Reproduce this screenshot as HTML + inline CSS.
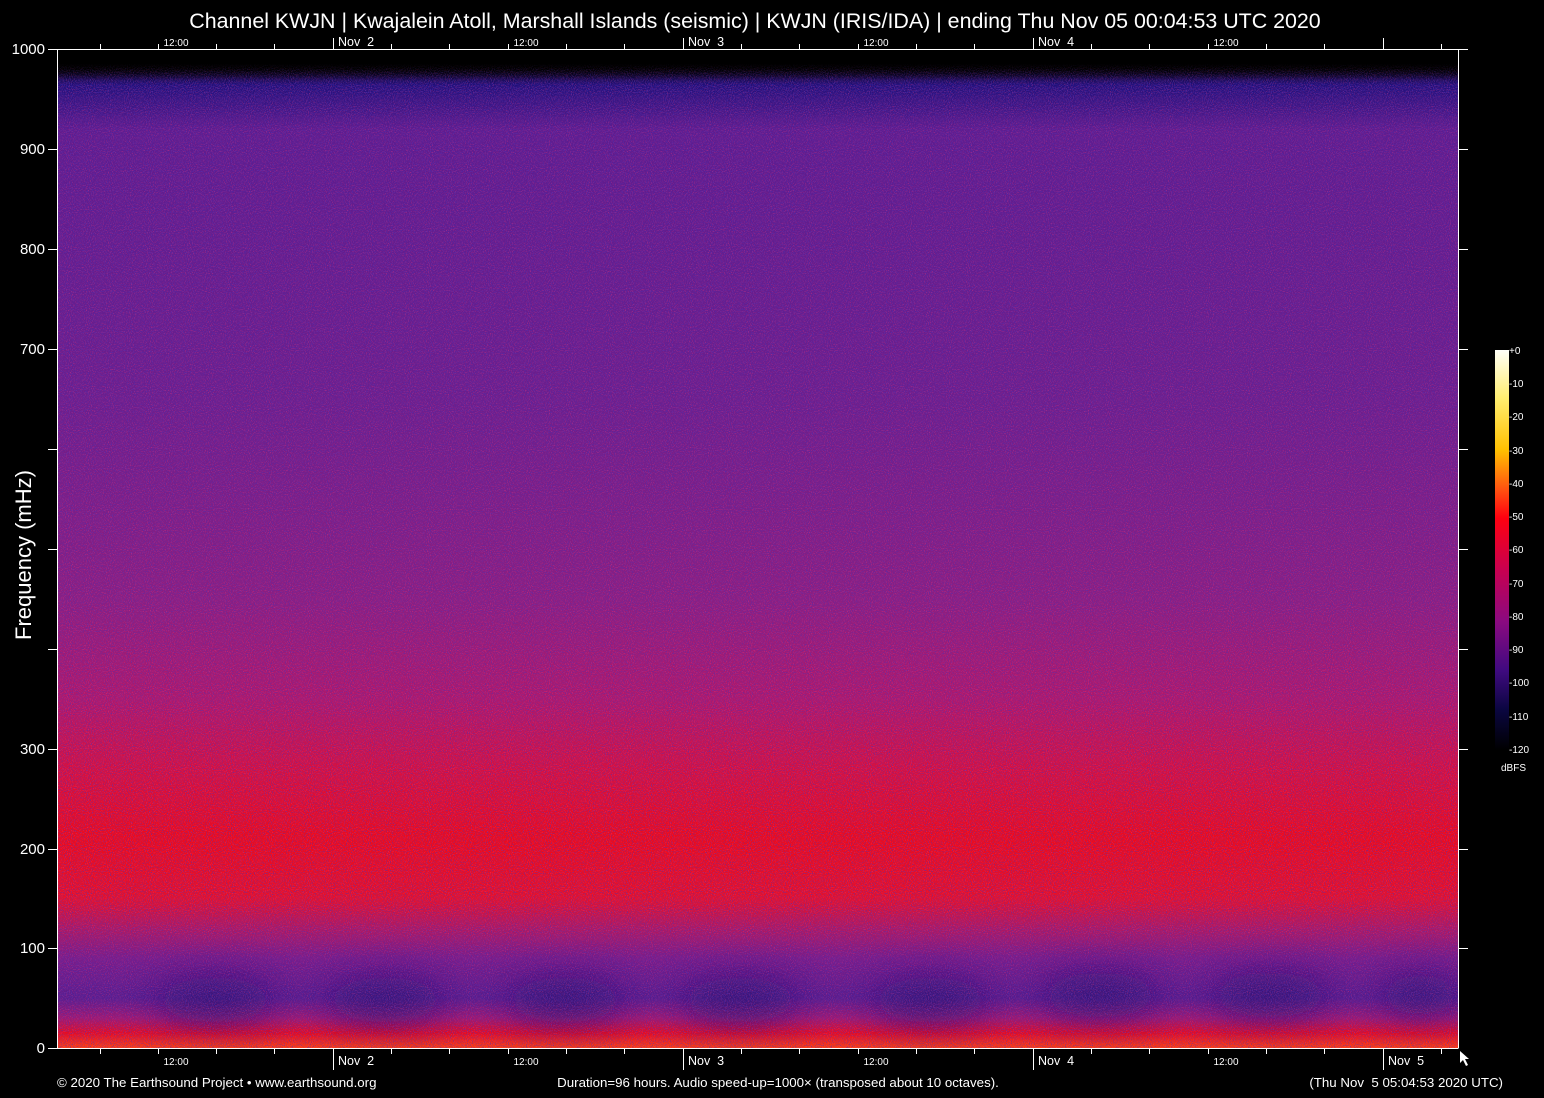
<!DOCTYPE html>
<html><head><meta charset="utf-8"><style>
html,body{margin:0;padding:0;background:#000;width:1544px;height:1098px;overflow:hidden}
svg{display:block}
text{font-family:"Liberation Sans",sans-serif;fill:#fff}
</style></head><body>
<svg width="1544" height="1098" viewBox="0 0 1544 1098" xmlns="http://www.w3.org/2000/svg">
<defs>
<linearGradient id="v" x1="0" y1="50" x2="0" y2="1048" gradientUnits="userSpaceOnUse">
<stop offset="0" stop-color="#000"/>
<stop offset="0.018" stop-color="#000"/>
<stop offset="0.035" stop-color="#20107a"/>
<stop offset="0.08" stop-color="#5e1c8e"/>
<stop offset="0.35" stop-color="#6c1e8c"/>
<stop offset="0.55" stop-color="#8c1e80"/>
<stop offset="0.65" stop-color="#b0186a"/>
<stop offset="0.72" stop-color="#d8103e"/>
<stop offset="0.79" stop-color="#f00a18"/>
<stop offset="0.85" stop-color="#e81028"/>
<stop offset="0.88" stop-color="#b01860"/>
<stop offset="0.91" stop-color="#7a1c88"/>
<stop offset="0.95" stop-color="#5a1c8c"/>
<stop offset="0.97" stop-color="#a01870"/>
<stop offset="0.985" stop-color="#e80c20"/>
<stop offset="1" stop-color="#ff4010"/>
</linearGradient>
<linearGradient id="top" x1="0" y1="50" x2="0" y2="80" gradientUnits="userSpaceOnUse">
<stop offset="0" stop-color="#000" stop-opacity="1"/>
<stop offset="0.45" stop-color="#000" stop-opacity="1"/>
<stop offset="1" stop-color="#000" stop-opacity="0"/>
</linearGradient>
<filter id="n1" x="0" y="0" width="100%" height="100%">
<feTurbulence type="fractalNoise" baseFrequency="0.95" numOctaves="1" seed="3"/>
<feColorMatrix type="matrix" values="0 0 0 0 0.08  0 0 0 0 0.03  0 0 0 0 0.45  0 0 0 3 -1.45"/>
</filter>
<filter id="n2" x="0" y="0" width="100%" height="100%">
<feTurbulence type="fractalNoise" baseFrequency="0.95" numOctaves="1" seed="11"/>
<feColorMatrix type="matrix" values="0 0 0 0 0.95  0 0 0 0 0.05  0 0 0 0 0.25  0 0 0 3 -1.5"/>
</filter>
<filter id="b" x="-50%" y="-100%" width="200%" height="300%"><feGaussianBlur stdDeviation="18"/></filter>
<clipPath id="c"><rect x="58" y="50" width="1400" height="998"/></clipPath>
</defs>
<g clip-path="url(#c)">
<rect x="58" y="50" width="1400" height="998" fill="url(#v)"/>
<g filter="url(#b)" fill="#200a70" opacity="0.75">
<ellipse cx="215" cy="1000" rx="60" ry="22"/>
<ellipse cx="385" cy="1000" rx="60" ry="22"/>
<ellipse cx="565" cy="1000" rx="60" ry="22"/>
<ellipse cx="740" cy="1000" rx="60" ry="22"/>
<ellipse cx="930" cy="1000" rx="60" ry="22"/>
<ellipse cx="1100" cy="995" rx="60" ry="22"/>
<ellipse cx="1270" cy="995" rx="60" ry="22"/>
<ellipse cx="1420" cy="995" rx="40" ry="20"/>
</g>
<rect x="58" y="50" width="1400" height="998" filter="url(#n2)" opacity="0.5"/>
<rect x="58" y="50" width="1400" height="998" filter="url(#n1)" opacity="0.85"/>
<rect x="58" y="50" width="1400" height="30" fill="url(#top)"/>
</g>
<g stroke="#fff" stroke-width="1" fill="none">
<line x1="57.5" y1="49.5" x2="1468" y2="49.5"/>
<line x1="57.5" y1="49.5" x2="57.5" y2="1048.5"/>
<line x1="57.5" y1="1048.5" x2="1458" y2="1048.5"/>
<line x1="1458.5" y1="49.5" x2="1458.5" y2="1048.5"/>
<path d="M48 49.5h10M48 149.5h10M48 249.5h10M48 349.5h10M48 449.5h10M48 549.5h10M48 649.5h10M48 749.5h10M48 849.5h10M48 948.5h10M48 1048.5h10"/>
<path d="M1458 149.5h10M1458 249.5h10M1458 349.5h10M1458 449.5h10M1458 549.5h10M1458 649.5h10M1458 749.5h10M1458 849.5h10M1458 948.5h10"/>
<path d="M100.5 44v6M158.5 44v6M216.5 44v6M274.5 44v6M333.5 38v12M391.5 44v6M449.5 44v6M508.5 44v6M566.5 44v6M624.5 44v6M683.5 38v12M741.5 44v6M799.5 44v6M858.5 44v6M916.5 44v6M974.5 44v6M1033.5 38v12M1091.5 44v6M1149.5 44v6M1208.5 44v6M1266.5 44v6M1324.5 44v6M1383.5 38v12M1441.5 44v6"/>
<path d="M100.5 1048v6M158.5 1048v6M216.5 1048v6M274.5 1048v6M333.5 1048v22M391.5 1048v6M449.5 1048v6M508.5 1048v6M566.5 1048v6M624.5 1048v6M683.5 1048v22M741.5 1048v6M799.5 1048v6M858.5 1048v6M916.5 1048v6M974.5 1048v6M1033.5 1048v22M1091.5 1048v6M1149.5 1048v6M1208.5 1048v6M1266.5 1048v6M1324.5 1048v6M1383.5 1048v22M1441.5 1048v6"/>
</g>
<text x="755" y="28" font-size="21.4" text-anchor="middle">Channel KWJN | Kwajalein Atoll, Marshall Islands (seismic) | KWJN (IRIS/IDA) | ending Thu Nov 05 00:04:53 UTC 2020</text>
<g font-size="15" text-anchor="end">
<text x="45" y="54">1000</text><text x="45" y="154">900</text><text x="45" y="254">800</text><text x="45" y="354">700</text>
<text x="45" y="754">300</text><text x="45" y="854">200</text><text x="45" y="953">100</text><text x="45" y="1053">0</text>
</g>
<text transform="translate(31 555) rotate(-90)" font-size="22" text-anchor="middle">Frequency (mHz)</text>
<g font-size="10" text-anchor="middle">
<text x="176" y="46">12:00</text><text x="526" y="46">12:00</text><text x="876" y="46">12:00</text><text x="1226" y="46">12:00</text>
<text x="176" y="1065">12:00</text><text x="526" y="1065">12:00</text><text x="876" y="1065">12:00</text><text x="1226" y="1065">12:00</text>
</g>
<g font-size="12.5">
<text x="338" y="46" xml:space="preserve">Nov  2</text><text x="688" y="46" xml:space="preserve">Nov  3</text><text x="1038" y="46" xml:space="preserve">Nov  4</text>
<text x="338" y="1065" xml:space="preserve">Nov  2</text><text x="688" y="1065" xml:space="preserve">Nov  3</text><text x="1038" y="1065" xml:space="preserve">Nov  4</text><text x="1388" y="1065" xml:space="preserve">Nov  5</text>
</g>
<path d="M1460 1051l0 12 3-3 3 6 2-1-3-6 4 0z" fill="#fff"/>
<g font-size="13.3">
<text x="57" y="1087">© 2020 The Earthsound Project • www.earthsound.org</text>
<text x="778" y="1087" text-anchor="middle">Duration=96 hours. Audio speed-up=1000× (transposed about 10 octaves).</text>
<text x="1503" y="1087" text-anchor="end" xml:space="preserve">(Thu Nov  5 05:04:53 2020 UTC)</text>
</g>
<linearGradient id="cb" x1="0" y1="350" x2="0" y2="750" gradientUnits="userSpaceOnUse">
<stop offset="0" stop-color="#fffff8"/>
<stop offset="0.12" stop-color="#ffee70"/>
<stop offset="0.25" stop-color="#ffc000"/>
<stop offset="0.35" stop-color="#ff5010"/>
<stop offset="0.42" stop-color="#ff0010"/>
<stop offset="0.55" stop-color="#c80050"/>
<stop offset="0.68" stop-color="#8a0a80"/>
<stop offset="0.8" stop-color="#400a80"/>
<stop offset="0.9" stop-color="#0a0640"/>
<stop offset="1" stop-color="#000"/>
</linearGradient>
<rect x="1495" y="350" width="14" height="400" fill="url(#cb)"/>
<g font-size="10" fill="#fff">
<text x="1509" y="354">+0</text><text x="1509" y="387">-10</text><text x="1509" y="420">-20</text><text x="1509" y="454">-30</text>
<text x="1509" y="487">-40</text><text x="1509" y="520">-50</text><text x="1509" y="553">-60</text><text x="1509" y="587">-70</text>
<text x="1509" y="620">-80</text><text x="1509" y="653">-90</text><text x="1509" y="686">-100</text><text x="1509" y="720">-110</text>
<text x="1509" y="753">-120</text><text x="1501" y="771">dBFS</text>
</g>
</svg>
</body></html>
